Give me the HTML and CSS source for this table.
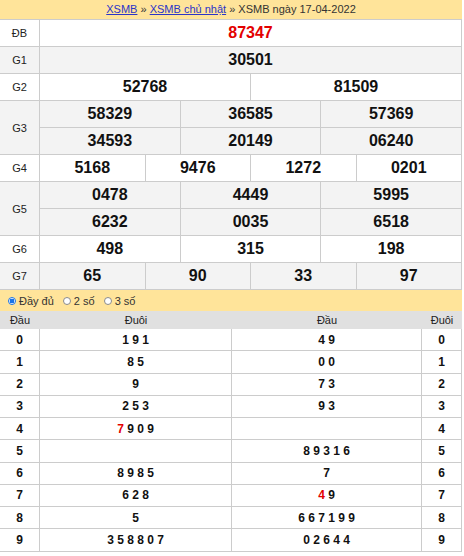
FILE: index.html
```html
<!DOCTYPE html>
<html lang="vi">
<head>
<meta charset="utf-8">
<title>XSMB ngày 17-04-2022</title>
<link rel="stylesheet" href="styles.css">
</head>
<body>
<div class="wrap">
  <div class="crumb"><a href="#">XSMB</a> » <a href="#">XSMB chủ nhật</a> » XSMB ngày 17-04-2022</div>
  <div class="results">
    <div class="row"><div class="label">ĐB</div><div class="cells c1"><div class="cell red">87347</div></div></div>
    <div class="row alt"><div class="label">G1</div><div class="cells c1"><div class="cell">30501</div></div></div>
    <div class="row"><div class="label">G2</div><div class="cells c2"><div class="cell">52768</div><div class="cell">81509</div></div></div>
    <div class="row alt double"><div class="label">G3</div><div class="cells c3">
      <div class="cell top">58329</div><div class="cell top">36585</div><div class="cell top">57369</div>
      <div class="cell">34593</div><div class="cell">20149</div><div class="cell">06240</div>
    </div></div>
    <div class="row"><div class="label">G4</div><div class="cells c4"><div class="cell">5168</div><div class="cell">9476</div><div class="cell">1272</div><div class="cell">0201</div></div></div>
    <div class="row alt double"><div class="label">G5</div><div class="cells c3">
      <div class="cell top">0478</div><div class="cell top">4449</div><div class="cell top">5995</div>
      <div class="cell">6232</div><div class="cell">0035</div><div class="cell">6518</div>
    </div></div>
    <div class="row"><div class="label">G6</div><div class="cells c3"><div class="cell">498</div><div class="cell">315</div><div class="cell">198</div></div></div>
    <div class="row alt"><div class="label">G7</div><div class="cells c4"><div class="cell">65</div><div class="cell">90</div><div class="cell">33</div><div class="cell">97</div></div></div>
  </div>
  <div class="opts">
    <label class="opt"><span class="radio checked"></span>Đầy đủ</label>
    <label class="opt"><span class="radio"></span>2 số</label>
    <label class="opt"><span class="radio"></span>3 số</label>
  </div>
  <div class="loto">
    <div class="lhead"><div>Đầu</div><div>Đuôi</div><div>Đầu</div><div>Đuôi</div></div>
    <div class="lrow"><div class="k">0</div><div class="v">1 9 1</div><div class="v">4 9</div><div class="k">0</div></div>
    <div class="lrow"><div class="k">1</div><div class="v">8 5</div><div class="v">0 0</div><div class="k">1</div></div>
    <div class="lrow"><div class="k">2</div><div class="v">9</div><div class="v">7 3</div><div class="k">2</div></div>
    <div class="lrow"><div class="k">3</div><div class="v">2 5 3</div><div class="v">9 3</div><div class="k">3</div></div>
    <div class="lrow"><div class="k">4</div><div class="v"><span><span class="red">7</span> 9 0 9</span></div><div class="v"></div><div class="k">4</div></div>
    <div class="lrow"><div class="k">5</div><div class="v"></div><div class="v">8 9 3 1 6</div><div class="k">5</div></div>
    <div class="lrow"><div class="k">6</div><div class="v">8 9 8 5</div><div class="v">7</div><div class="k">6</div></div>
    <div class="lrow"><div class="k">7</div><div class="v">6 2 8</div><div class="v"><span><span class="red">4</span> 9</span></div><div class="k">7</div></div>
    <div class="lrow"><div class="k">8</div><div class="v">5</div><div class="v">6 6 7 1 9 9</div><div class="k">8</div></div>
    <div class="lrow"><div class="k">9</div><div class="v">3 5 8 8 0 7</div><div class="v">0 2 6 4 4</div><div class="k">9</div></div>
  </div>
</div>
</body>
</html>
```
FILE: styles.css
```css
* { box-sizing: border-box; }
html, body { margin: 0; padding: 0; background: #fff; }
body { font-family: "Liberation Sans", Arial, sans-serif; color: #222; }
.wrap { width: 462px; }
.crumb {
  height: 19px; line-height: 19px; background: #ffe49a;
  font-size: 11px; color: #333; text-align: center;
}
.crumb a { color: #2b35c8; text-decoration: underline; }
.results { border-top: 1px solid #ccc; }
.row { display: flex; height: 27px; border-bottom: 1px solid #ccc; }
.row.double { height: 54px; }
.row.alt { background: #f3f3f3; }
.label {
  width: 40px; flex: none; border-right: 1px solid #ccc;
  display: flex; align-items: center; justify-content: center;
  font-size: 11px; color: #222;
}
.cells { flex: 1; display: grid; }
.c1 { grid-template-columns: 1fr; }
.c2 { grid-template-columns: 1fr 1fr; }
.c3 { grid-template-columns: 1fr 1fr 1fr; }
.c4 { grid-template-columns: 1fr 1fr 1fr 1fr; }
.cell {
  border-right: 1px solid #ccc;
  display: flex; align-items: center; justify-content: center;
  font-size: 16px; font-weight: bold; color: #111;
}
.cell.top { border-bottom: 1px solid #ccc; }
.red { color: #e30000; }
.cell.red { color: #e30000; }
.opts {
  height: 21px; background: #ffe49a; display: flex; align-items: center;
  padding-left: 8px; font-size: 11px; color: #333; gap: 9px;
}
.opt { display: flex; align-items: center; }
.radio {
  width: 8px; height: 8px; border-radius: 50%; border: 1px solid #8a8a8a;
  background: #fff; margin-right: 3px; display: inline-block;
}
.radio.checked { border-color: #1a73e8; background: radial-gradient(circle, #1a73e8 0 2.2px, #fff 2.6px); }
.lhead {
  display: grid; grid-template-columns: 40px 192px 190px 40px;
  height: 18px; background: #e0e0e0; font-size: 11px; color: #222;
}
.lhead div { display: flex; align-items: center; justify-content: center; }
.lrow {
  display: grid; grid-template-columns: 40px 192px 190px 40px;
  height: 22.25px; border-bottom: 1px solid #ccc;
}
.lrow div {
  border-right: 1px solid #ccc; display: flex; align-items: center; justify-content: center;
  font-size: 12px; font-weight: bold; color: #111;
}
.lrow div span { display: inline; }
```
